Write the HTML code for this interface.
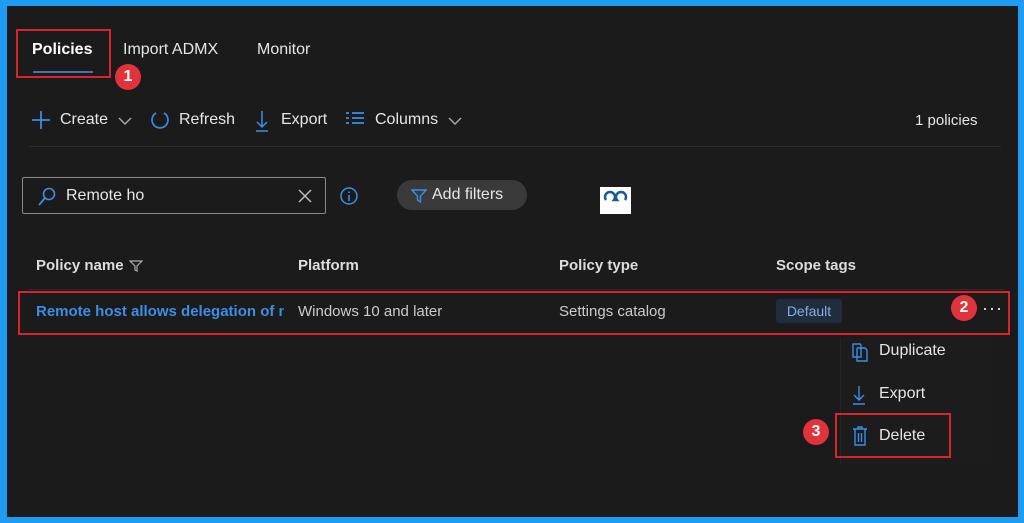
<!DOCTYPE html>
<html><head><style>
*{margin:0;padding:0;box-sizing:border-box}
body{width:1024px;height:523px;background:#1e9cf2;font-family:"Liberation Sans",sans-serif;overflow:hidden;position:relative}
#p{position:absolute;left:7px;top:6px;width:1011px;height:511px;background:#1b1b1b;color:#e6e6e6}
.a{position:absolute;white-space:nowrap}
.t{font-size:16px}
.red{position:absolute;border:2px solid #d9232e}
.badge{position:absolute;width:26px;height:26px;border-radius:50%;background:#e0333b;color:#fff;font-size:16px;font-weight:bold;text-align:center;line-height:26px}
.blue{color:#3a8ee6}
</style></head><body>
<div id="p">
<div class="a t" style="left:25px;top:35px;font-weight:bold;color:#fff">Policies</div>
<div class="a" style="left:26px;top:65px;width:60px;height:2px;background:#4a6fb3"></div>
<div class="a t" style="left:116px;top:35px">Import ADMX</div>
<div class="a t" style="left:250px;top:35px">Monitor</div>
<div class="red" style="left:9px;top:23px;width:95px;height:49px"></div>
<div class="badge" style="left:108px;top:58px">1</div>

<svg class="a" style="left:24px;top:104px" width="20" height="20"><path d="M10 1V19M1 10H19" stroke="#3a8ee6" stroke-width="1.8"/></svg>
<div class="a t" style="left:53px;top:105px">Create</div>
<svg class="a" style="left:111px;top:110px" width="14" height="10"><path d="M1 2L7 8L13 2" stroke="#aaa" stroke-width="1.4" fill="none"/></svg>
<svg class="a" style="left:142px;top:103px" width="22" height="22"><path d="M7 4 A8 8 0 1 0 15 4" stroke="#3a8ee6" stroke-width="1.6" fill="none"/></svg>
<div class="a t" style="left:172px;top:105px">Refresh</div>
<svg class="a" style="left:247px;top:103px" width="16" height="24"><path d="M8 2V18M3 13L8 18L13 13M2 22H14" stroke="#3a8ee6" stroke-width="1.5" fill="none"/></svg>
<div class="a t" style="left:274px;top:105px">Export</div>
<svg class="a" style="left:338px;top:105px" width="20" height="16"><path d="M1 2H4M7 2H19M1 7H4M7 7H19M1 12H4M7 12H19" stroke="#3a8ee6" stroke-width="1.8"/></svg>
<div class="a t" style="left:368px;top:105px">Columns</div>
<svg class="a" style="left:441px;top:110px" width="14" height="10"><path d="M1 2L7 8L13 2" stroke="#aaa" stroke-width="1.4" fill="none"/></svg>
<div class="a t" style="left:908px;top:106px;font-size:15px">1 policies</div>
<div class="a" style="left:22px;top:140px;width:972px;height:1px;background:#2c2c2c"></div>

<div class="a" style="left:15px;top:171px;width:304px;height:37px;border:1px solid #8a8a8a;border-radius:2px"></div>
<svg class="a" style="left:30px;top:181px" width="20" height="20"><circle cx="12" cy="7" r="5.5" stroke="#3a8ee6" stroke-width="1.6" fill="none"/><path d="M8 11L2 18" stroke="#3a8ee6" stroke-width="1.8"/></svg>
<div class="a t" style="left:59px;top:181px">Remote ho</div>
<svg class="a" style="left:290px;top:182px" width="16" height="16"><path d="M2 2L14 14M14 2L2 14" stroke="#bbb" stroke-width="1.5"/></svg>
<svg class="a" style="left:332px;top:180px" width="20" height="20"><circle cx="10" cy="10" r="8" stroke="#3a8ee6" stroke-width="1.5" fill="none"/><path d="M10 9V15M10 5.5V7" stroke="#3a8ee6" stroke-width="1.6"/></svg>
<div class="a" style="left:390px;top:174px;width:130px;height:30px;border-radius:15px;background:#3a3a3a"></div>
<svg class="a" style="left:404px;top:182px" width="16" height="16"><path d="M1 2H15L9.5 8V14L6.5 12V8Z" stroke="#3a8ee6" stroke-width="1.4" fill="none"/></svg>
<div class="a t" style="left:425px;top:180px">Add filters</div>
<div class="a" style="left:593px;top:181px;width:31px;height:27px;background:#fff"><svg width="31" height="27"><path d="M6 13a5 5 0 1 1 8 0l3 0a5 5 0 1 1 8 0" stroke="#1a5a9a" stroke-width="2.5" fill="none"/></svg></div>

<div class="a" style="left:29px;top:251px;font-size:15px;font-weight:bold;color:#ddd">Policy name</div>
<svg class="a" style="left:122px;top:253px" width="14" height="14"><path d="M1 2H13L8 7V12L6 11V7Z" stroke="#aaa" stroke-width="1.2" fill="none"/></svg>
<div class="a" style="left:291px;top:251px;font-size:15px;font-weight:bold;color:#ddd">Platform</div>
<div class="a" style="left:552px;top:251px;font-size:15px;font-weight:bold;color:#ddd">Policy type</div>
<div class="a" style="left:769px;top:251px;font-size:15px;font-weight:bold;color:#ddd">Scope tags</div>
<div class="a" style="left:22px;top:283px;width:975px;height:1px;background:#2c2c2c"></div>

<div class="a" style="left:29px;top:297px;font-size:15px;font-weight:bold;color:#3a8ee6;width:248px;overflow:hidden">Remote host allows delegation of n</div>
<div class="a" style="left:291px;top:297px;font-size:15px;color:#ccc">Windows 10 and later</div>
<div class="a" style="left:552px;top:297px;font-size:15px;color:#ccc">Settings catalog</div>
<div class="a" style="left:769px;top:293px;width:66px;height:24px;border-radius:3px;background:#1f2d3d;color:#7fb1e6;font-size:14px;text-align:center;line-height:24px">Default</div>
<div class="a" style="left:975px;top:292px;font-size:18px;color:#eee;letter-spacing:1px">···</div>
<div class="red" style="left:11px;top:285px;width:992px;height:44px"></div>
<div class="badge" style="left:944px;top:289px">2</div>

<div class="a" style="left:833px;top:332px;width:150px;height:126px;background:#1c1c1c;border-left:1px solid #242424"></div>
<svg class="a" style="left:844px;top:335px" width="18" height="22"><path d="M2 3H9L10 4V16H2Z M6 7H14L16 9V20H6V7" stroke="#3a8ee6" stroke-width="1.4" fill="none"/></svg>
<div class="a t" style="left:872px;top:336px">Duplicate</div>
<svg class="a" style="left:844px;top:378px" width="16" height="22"><path d="M8 2V16M3 11L8 16L13 11M2 20H14" stroke="#3a8ee6" stroke-width="1.4" fill="none"/></svg>
<div class="a t" style="left:872px;top:379px">Export</div>
<svg class="a" style="left:844px;top:419px" width="18" height="22"><path d="M2 4H16M7 4V2H11V4M4 4V20H14V4M7.5 8V17M10.5 8V17" stroke="#3a8ee6" stroke-width="1.4" fill="none"/></svg>
<div class="a t" style="left:872px;top:421px">Delete</div>
<div class="red" style="left:828px;top:407px;width:116px;height:45px"></div>
<div class="badge" style="left:796px;top:413px">3</div>
</div>
</body></html>
